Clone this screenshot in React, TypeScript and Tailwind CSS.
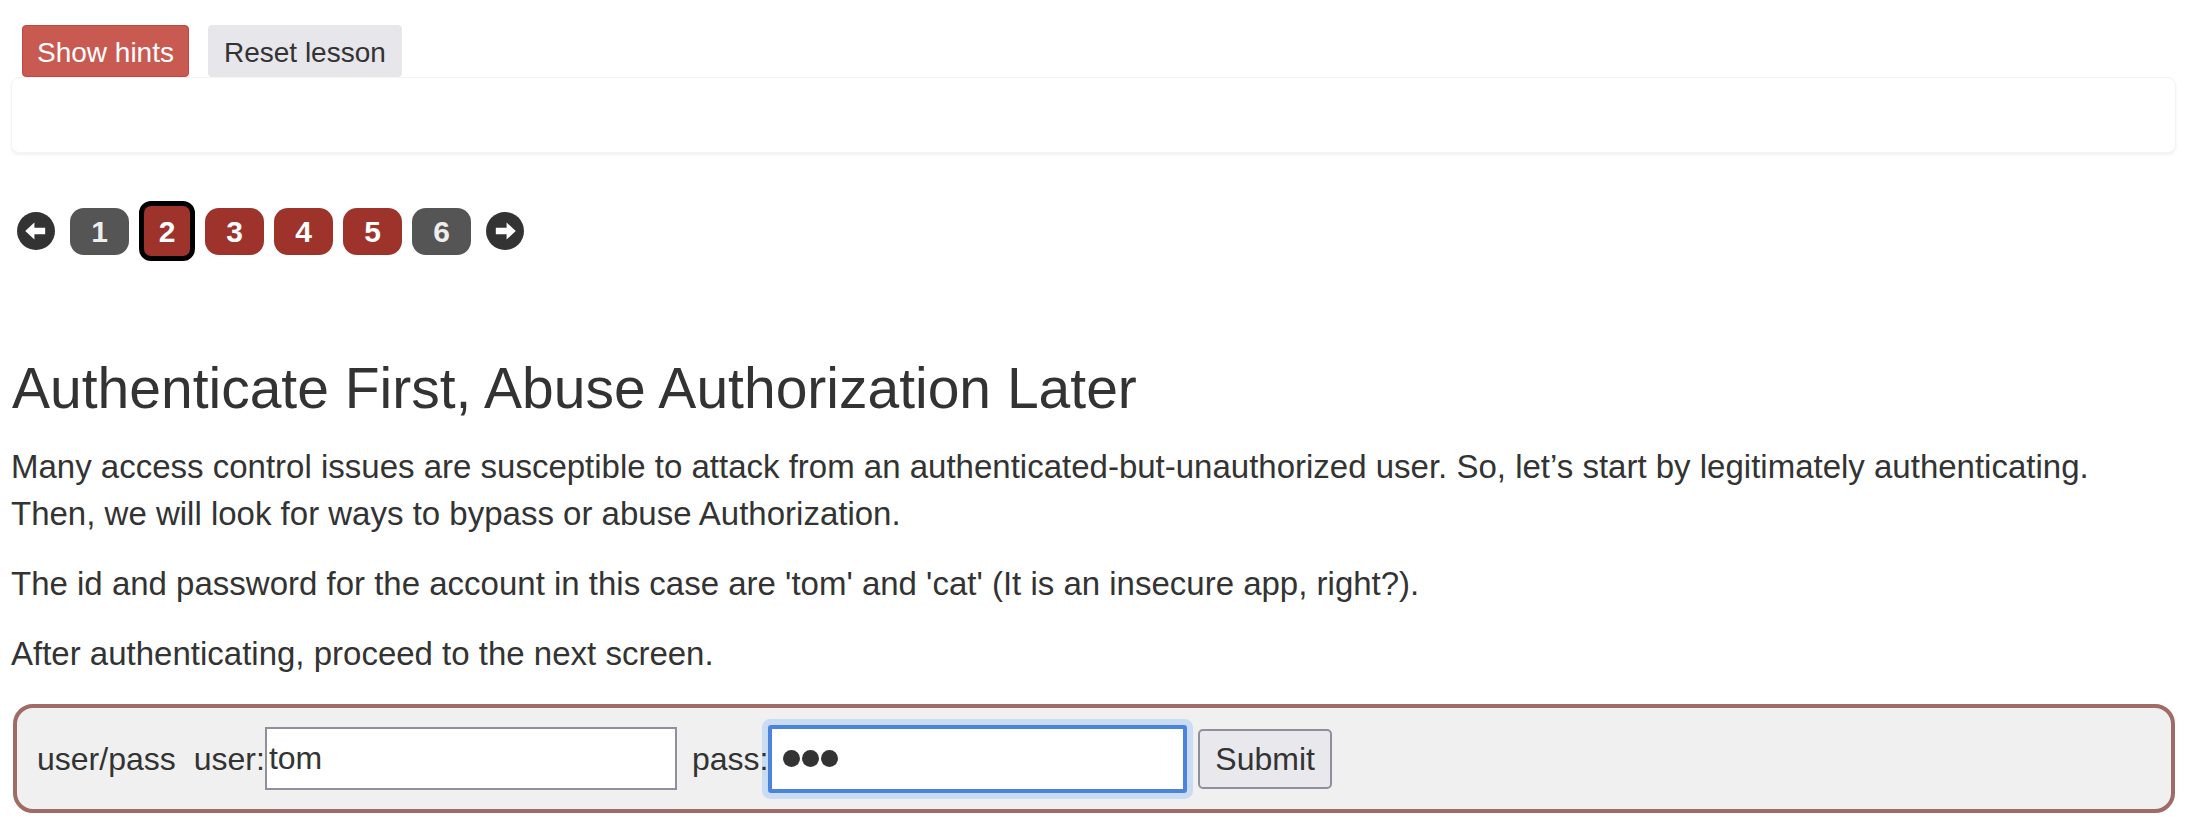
import React from 'react';

const ArrowCircle = ({ dir }: { dir: 'left' | 'right' }) => (
  <svg width="38" height="38" viewBox="0 0 24 24" className={dir === 'right' ? 'rotate-180' : ''}>
    <circle cx="12" cy="12" r="12" fill="#333333" />
    <path d="M5.2 12 L11 6.6 V9.9 H17.8 V14.1 H11 V17.4 Z" fill="#ffffff" strokeLinejoin="round" />
  </svg>
);

const pages = [
  { n: 1, tone: 'gray' },
  { n: 2, tone: 'active' },
  { n: 3, tone: 'red' },
  { n: 4, tone: 'red' },
  { n: 5, tone: 'red' },
  { n: 6, tone: 'gray' },
];

export default function App() {
  return (
    <div className="min-h-screen bg-white text-[#333] font-['Liberation_Sans',Arial,sans-serif]">
      {/* Lesson buttons */}
      <div className="flex gap-[19px] pl-[22px] pt-[25px]">
        <button className="h-[52px] px-[14px] pt-[4px] flex items-center rounded-[4px] border border-[#c2473f] bg-[#c95a52] text-white text-[28px] leading-normal">
          Show hints
        </button>
        <button className="h-[52px] px-[15px] pt-[4px] flex items-center rounded-[4px] border border-[#e6e6eb] bg-[#e6e6eb] text-[#333] text-[28px] leading-normal">
          Reset lesson
        </button>
      </div>

      {/* Hints panel */}
      <div className="ml-[11px] mr-[10px] h-[76px] rounded-[8px] border border-[#f4f4f4] bg-white shadow-[0_2px_3px_rgba(0,0,0,0.06)]" />

      {/* Pagination */}
      <div className="mt-[48px] h-[60px] pl-[17px] flex items-center">
        <ArrowCircle dir="left" />
        <div className="ml-[15px] flex items-center gap-[10px]">
          {pages.map(p =>
            p.tone === 'active' ? (
              <div
                key={p.n}
                className="w-[56px] h-[60px] rounded-[12px] border-[5px] border-black bg-[#9e332c] flex items-center justify-center text-white text-[30px] font-bold"
              >
                {p.n}
              </div>
            ) : (
              <div
                key={p.n}
                className={`w-[59px] h-[47px] rounded-[14px] flex items-center justify-center text-[30px] font-bold ${
                  p.tone === 'red' ? 'bg-[#9e332c] text-white' : 'bg-[#555555] text-[#eeeeee]'
                }`}
              >
                {p.n}
              </div>
            )
          )}
        </div>
        <div className="ml-[15px]">
          <ArrowCircle dir="right" />
        </div>
      </div>

      {/* Lesson content */}
      <h2 className="mt-[96px] pl-[12px] text-[57px] leading-[63px] font-normal">
        Authenticate First, Abuse Authorization Later
      </h2>
      <div className="mt-[23px] pl-[11px] pr-[8px] text-[33px] leading-[47px]">
        <p className="mb-[23px]">
          Many access control issues are susceptible to attack from an authenticated-but-unauthorized user. So, let’s start by legitimately authenticating.
          <br />
          Then, we will look for ways to bypass or abuse Authorization.
        </p>
        <p className="mb-[23px]">
          The id and password for the account in this case are 'tom' and 'cat' (It is an insecure app, right?).
        </p>
        <p>After authenticating, proceed to the next screen.</p>
      </div>

      {/* Attack form */}
      <form
        onSubmit={e => e.preventDefault()}
        className="mt-[27px] ml-[13px] mr-[11px] h-[109px] rounded-[20px] border-[4px] border-[#a06a66] bg-[#f0f0f0] pl-[20px] flex items-center text-[32px]"
      >
        <span>user/pass</span>
        <span className="ml-[18px]">user:</span>
        <input
          readOnly
          value="tom"
          className="w-[412px] h-[63px] border-2 border-[#8f8f9d] bg-white px-[2px] text-[32px] text-[#333] outline-none font-['Liberation_Sans',Arial,sans-serif]"
        />
        <span className="ml-[15px] relative z-10">pass:</span>
        <div className="w-[419px] h-[68px] rounded-[3px] border-[4px] border-[#4a84dc] bg-white shadow-[0_0_0_6px_#c9dcf3] pl-[11px] flex items-center gap-[2px]">
          <span className="w-[17px] h-[17px] rounded-full bg-[#333]" />
          <span className="w-[17px] h-[17px] rounded-full bg-[#333]" />
          <span className="w-[17px] h-[17px] rounded-full bg-[#333]" />
        </div>
        <button
          type="submit"
          className="ml-[11px] h-[60px] px-[15px] rounded-[5px] border-2 border-[#8f8f9d] bg-[#e9e9ed] text-[32px] text-[#333] leading-none"
        >
          Submit
        </button>
      </form>
    </div>
  );
}
